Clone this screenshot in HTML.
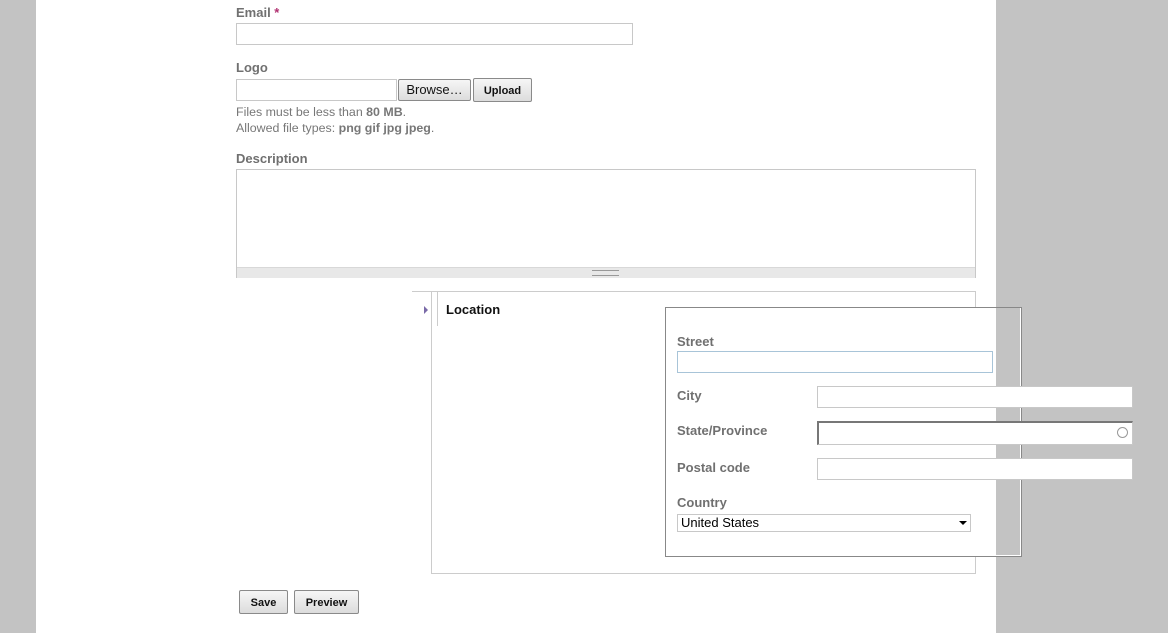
<!DOCTYPE html>
<html><head><style>
body{margin:0;width:1168px;height:633px;background:#c3c3c3;position:relative;overflow:hidden;font-family:"Liberation Sans","DejaVu Sans",sans-serif;}
.pg{position:absolute;left:36px;top:0;width:960px;height:633px;background:#fff;}
.a{position:absolute;}
.lbl{position:absolute;font-weight:bold;font-size:13px;color:#707070;}
.inp{position:absolute;box-sizing:border-box;border:1px solid #c8c8c8;background:#fff;}
.btn{position:absolute;box-sizing:border-box;border:1px solid #8a8a8a;border-radius:2px;background:linear-gradient(#f6f6f6,#dcdcdc);font-size:11px;font-weight:bold;color:#111;text-align:center;}
.sm{position:absolute;font-size:12.4px;color:#777;}
</style></head><body>
<div class="pg"></div>
<div class="lbl" style="left:236px;top:5px">Email <span style="color:#b03070">*</span></div>
<div class="inp" style="left:236px;top:23px;width:397px;height:22px"></div>
<div class="lbl" style="left:236px;top:60px">Logo</div>
<div class="inp" style="left:236px;top:79px;width:161px;height:22px"></div>
<div class="btn" style="left:398px;top:79px;width:73px;height:22px;font-weight:normal;font-size:13px;line-height:20px">Browse…</div>
<div class="btn" style="left:473px;top:78px;width:59px;height:24px;line-height:24px">Upload</div>
<div class="sm" style="left:236px;top:105px">Files must be less than <b>80 MB</b>.</div>
<div class="sm" style="left:236px;top:121px">Allowed file types: <b>png gif jpg jpeg</b>.</div>
<div class="lbl" style="left:236px;top:151px">Description</div>
<div class="inp" style="left:236px;top:169px;width:740px;height:109px"></div>
<div class="a" style="left:237px;top:267px;width:738px;height:10px;background:#e8e8e8;border-top:1px solid #d8d8d8"></div>
<div class="a" style="left:592px;top:270px;width:27px;height:4px;border-top:1px solid #999;border-bottom:1px solid #999"></div>
<div class="a" style="left:412px;top:291px;width:220px;height:1px;background:#ccc"></div>
<div class="a" style="left:431px;top:291px;width:543px;height:281px;border:1px solid #ccc"></div>
<div class="a" style="left:437px;top:292px;width:1px;height:34px;background:#ccc"></div>
<div class="a" style="left:424px;top:306px;width:0;height:0;border-left:4px solid #7a6aa8;border-top:4px solid transparent;border-bottom:4px solid transparent"></div>
<div class="a" style="left:446px;top:302px;font-size:13px;font-weight:bold;color:#111">Location</div>
<div class="a" style="left:665px;top:307px;width:355px;height:248px;border:1px solid #888;background:#fff"></div>
<div class="a" style="left:996px;top:308px;width:24px;height:247px;background:#c3c3c3"></div>
<div class="lbl" style="left:677px;top:334px">Street</div>
<div class="inp" style="left:677px;top:351px;width:316px;height:22px;border-color:#a8c4d8"></div>
<div class="lbl" style="left:677px;top:388px">City</div>
<div class="inp" style="left:817px;top:386px;width:316px;height:22px"></div>
<div class="lbl" style="left:677px;top:423px">State/Province</div>
<div class="inp" style="left:817px;top:421px;width:316px;height:24px;border:1px solid #c8c8c8;border-top:2px solid #777;border-left:2px solid #777"></div>
<div class="a" style="left:1117px;top:427px;width:9px;height:9px;border:1px solid #999;border-radius:50%"></div>
<div class="lbl" style="left:677px;top:460px">Postal code</div>
<div class="inp" style="left:817px;top:458px;width:316px;height:22px"></div>
<div class="lbl" style="left:677px;top:495px">Country</div>
<div class="inp" style="left:677px;top:514px;width:294px;height:18px;font-size:13px;color:#000;padding-left:3px;line-height:16px">United States</div>
<div class="a" style="left:959px;top:521px;width:0;height:0;border-top:4px solid #000;border-left:4px solid transparent;border-right:4px solid transparent"></div>
<div class="btn" style="left:239px;top:590px;width:49px;height:24px;line-height:24px">Save</div>
<div class="btn" style="left:294px;top:590px;width:65px;height:24px;line-height:24px">Preview</div>
</body></html>
